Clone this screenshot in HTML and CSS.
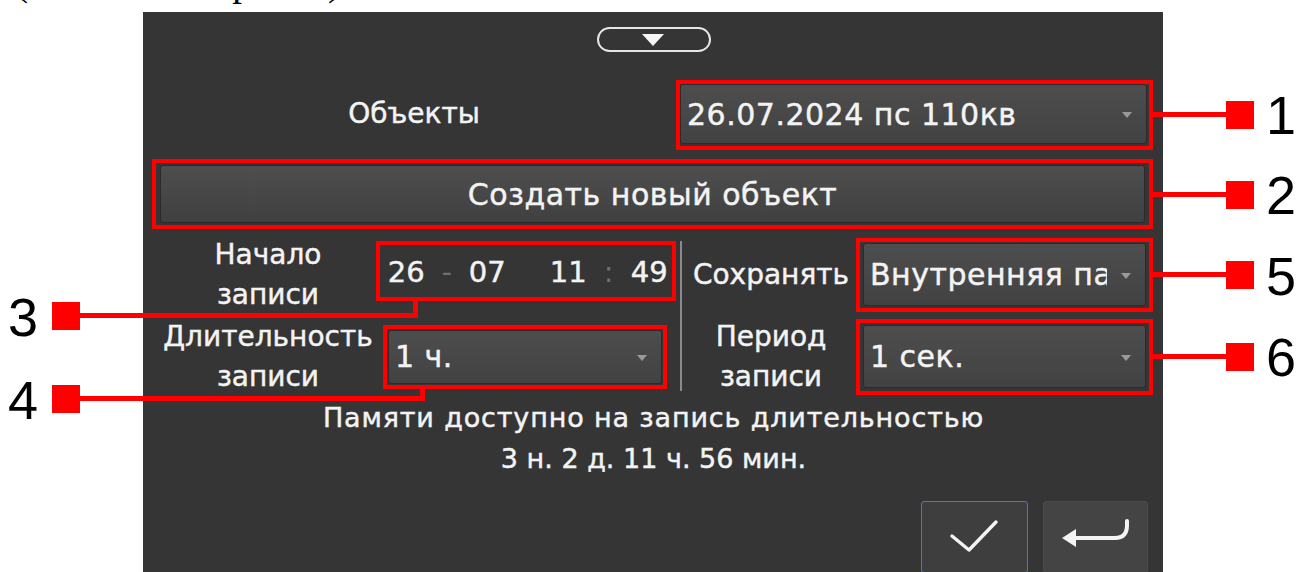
FILE: index.html
```html
<!DOCTYPE html>
<html lang="ru">
<head>
<meta charset="utf-8">
<title>Параметры записи</title>
<link rel="stylesheet" href="styles.css">
</head>
<body>
<div class="sheet">
  <div class="caption"><span>(элементы экранов)</span></div>

  <div class="stage">
    <section class="panel">
      <div class="pull-row">
        <div class="pull"><span class="pull-arrow"></span></div>
      </div>

      <div class="row-objects">
        <div class="label label-objects">Объекты</div>
        <div class="combo combo-objects">
          <span class="combo-text">26.07.2024 пс 110кв</span>
          <span class="combo-arrow"></span>
        </div>
      </div>

      <div class="btn-create">Создать новый объект</div>

      <div class="settings">
        <div class="settings-left">
          <div class="label two-line">Начало<br>записи</div>
          <div class="time-field">
            <span>26</span><span class="sep">-</span><span>07</span><span></span><span>11</span><span class="sep">:</span><span>49</span>
          </div>
          <div class="label two-line">Длительность<br>записи</div>
          <div class="combo combo-duration">
            <span class="combo-text">1 ч.</span>
            <span class="combo-arrow"></span>
          </div>
        </div>

        <div class="divider"></div>

        <div class="settings-right">
          <div class="label">Сохранять</div>
          <div class="combo combo-side combo-storage">
            <span class="combo-text">Внутренняя память</span>
            <span class="combo-arrow"></span>
          </div>
          <div class="label two-line">Период<br>записи</div>
          <div class="combo combo-side">
            <span class="combo-text">1 сек.</span>
            <span class="combo-arrow"></span>
          </div>
        </div>
      </div>

      <div class="memory-info">
        <div class="memory-title">Памяти доступно на запись длительностью</div>
        <div class="memory-value">3 н. 2 д. 11 ч. 56 мин.</div>
      </div>

      <div class="actions">
        <div class="btn-square btn-ok">
          <svg width="107" height="72" viewBox="0 0 107 72">
            <polyline points="31,35 48,49 75,21" fill="none" stroke="#f4f4f4" stroke-width="3.4" stroke-linecap="round" stroke-linejoin="round"/>
          </svg>
        </div>
        <div class="btn-square btn-back">
          <svg width="105" height="72" viewBox="0 0 105 72">
            <path d="M30 37 H72 Q84 37 84 24 V20" fill="none" stroke="#f4f4f4" stroke-width="4" stroke-linecap="round"/>
            <polygon points="19,37 33,28 33,46" fill="#f4f4f4"/>
          </svg>
        </div>
      </div>
    </section>
  </div>

  <!-- numbered callouts drawn over the panel -->
  <div class="callouts">
    <div class="frame f1"></div>
    <div class="frame f2"></div>
    <div class="frame f3"></div>
    <div class="frame f4"></div>
    <div class="frame f5"></div>
    <div class="frame f6"></div>

    <div class="lead lh1"></div>
    <div class="lead lh2"></div>
    <div class="lead lh5"></div>
    <div class="lead lh6"></div>
    <div class="lead lh3"></div>
    <div class="lead lv3"></div>
    <div class="lead lh4"></div>
    <div class="lead lv4"></div>

    <div class="tag t1"></div>
    <div class="tag t2"></div>
    <div class="tag t5"></div>
    <div class="tag t6"></div>
    <div class="tag t3"></div>
    <div class="tag t4"></div>

    <div class="num n1">1</div>
    <div class="num n2">2</div>
    <div class="num n5">5</div>
    <div class="num n6">6</div>
    <div class="num n3">3</div>
    <div class="num n4">4</div>
  </div>
</div>
</body>
</html>
```

FILE: styles.css
```css
* {
  box-sizing: border-box;
}

html,
body {
  margin: 0;
  padding: 0;
  background: #ffffff;
}

.sheet {
  position: relative;
  width: 1316px;
  height: 572px;
  overflow: hidden;
}

/* caption line of the document, mostly above the fold */
.caption {
  display: flow-root;
  height: 12px;
  padding-left: 15px;
  font: 39px/40px "Liberation Serif", serif;
  color: #000;
}

.caption span {
  display: block;
  margin-top: -38px;
  white-space: nowrap;
}

.stage {
  padding-left: 143px;
}

/* device screen */
.panel {
  width: 1020px;
  height: 560px;
  background: #353535;
  padding: 15px 16px 0 17px;
  color: #f3f3f3;
  font-family: "DejaVu Sans", "Open Sans", sans-serif;
  font-size: 28px;
  -webkit-text-stroke: 0.45px currentColor;
}

.pull-row {
  display: flex;
  justify-content: center;
  height: 25px;
}

.pull {
  width: 114px;
  height: 25px;
  border: 2px solid #e6e6e6;
  border-radius: 13px;
  display: flex;
  align-items: center;
  justify-content: center;
}

.pull-arrow {
  width: 0;
  height: 0;
  border-left: 11px solid transparent;
  border-right: 11px solid transparent;
  border-top: 12px solid #f6f6f6;
  margin-left: -2px;
}

.label {
  text-align: center;
  line-height: 40px;
  white-space: nowrap;
}

.row-objects {
  display: flex;
  align-items: center;
  margin-top: 32px;
  height: 60px;
}

.label-objects {
  flex: 1;
  padding-right: 12px;
}

/* drop-down field */
.combo {
  position: relative;
  display: flex;
  align-items: center;
  height: 100%;
  padding: 0 40px 0 6px;
  background: linear-gradient(#4d4d4d, #424242);
  border: 1px solid #2b2b2b;
  border-radius: 3px;
  overflow: hidden;
  font-size: 30px;
  letter-spacing: 0.5px;
}

.combo-text {
  white-space: nowrap;
  overflow: hidden;
}

.combo-arrow {
  position: absolute;
  right: 14px;
  top: 50%;
  margin-top: -2px;
  width: 0;
  height: 0;
  border-left: 5px solid transparent;
  border-right: 5px solid transparent;
  border-top: 6px solid #9a9a9a;
}

.combo-objects {
  width: 467px;
}

.btn-create {
  margin-top: 21px;
  margin-right: 2px;
  height: 58px;
  display: flex;
  align-items: center;
  justify-content: center;
  background: linear-gradient(#4e4e4e, #404040);
  border: 1px solid #2a2a2a;
  border-radius: 3px;
  font-size: 30px;
  letter-spacing: 0.5px;
}

.settings {
  display: flex;
  margin-top: 20px;
  height: 145px;
}

.settings-left {
  width: 520px;
  display: grid;
  grid-template-columns: 216px 1fr;
  grid-template-rows: 63px 63px;
  row-gap: 19px;
  align-items: center;
}

.settings-right {
  flex: 1;
  display: grid;
  grid-template-columns: 178px 1fr;
  grid-template-rows: 63px 63px;
  row-gap: 19px;
  align-items: center;
}

.divider {
  width: 2px;
  margin: -2px 0 -3px;
  background: #8a8a8a;
}

.time-field {
  display: grid;
  grid-template-columns: repeat(7, 40.5px);
  margin-left: 10px;
  padding-bottom: 6px;
  font-size: 29px;
}

.time-field span {
  text-align: center;
}

.time-field .sep {
  color: #6f6f6f;
  -webkit-text-stroke: 0;
}

.combo-duration {
  height: 54px;
  margin: 0 18px 0 12px;
}

.combo-side {
  margin: 0 1px 0 3px;
}

.combo-storage {
  padding-right: 38px;
}

.memory-info {
  margin-top: 9px;
  text-align: center;
  line-height: 41px;
  font-size: 27px;
}

.memory-title {
  letter-spacing: 0.85px;
}

.actions {
  display: flex;
  justify-content: flex-end;
  gap: 15px;
  margin-top: 22px;
  margin-right: -1px;
}

.btn-square {
  height: 72px;
  border-radius: 3px;
  display: flex;
}

.btn-ok {
  width: 107px;
  background: #3e3e3e;
  border: 1.5px solid #3d7fc6;
}

.btn-ok svg {
  margin: -1.5px;
}

.btn-back {
  width: 105px;
  background: #444444;
  border: 1px solid #4a4a4a;
}

.btn-back svg {
  margin: -1px;
}

/* annotation layer */
.callouts {
  position: absolute;
  inset: 0;
  pointer-events: none;
}

.frame {
  position: absolute;
  border: 4px solid #ff0000;
}

.f1 { left: 676px; top: 80px;  width: 477px;  height: 70px; }
.f2 { left: 152px; top: 159px; width: 1001px; height: 70px; }
.f3 { left: 376px; top: 241px; width: 300px;  height: 60px; }
.f4 { left: 383px; top: 325px; width: 284px;  height: 64px; }
.f5 { left: 856px; top: 238px; width: 297px;  height: 74px; }
.f6 { left: 856px; top: 319px; width: 297px;  height: 76px; }

.lead {
  position: absolute;
  background: #ff0000;
}

.lh1 { left: 1153px; top: 112px; width: 75px; height: 5px; }
.lh2 { left: 1153px; top: 192px; width: 75px; height: 5px; }
.lh5 { left: 1153px; top: 272px; width: 75px; height: 5px; }
.lh6 { left: 1153px; top: 354px; width: 75px; height: 5px; }
.lh3 { left: 80px;   top: 313px; width: 338px; height: 5px; }
.lv3 { left: 413px;  top: 301px; width: 5px;   height: 17px; }
.lh4 { left: 80px;   top: 396px; width: 345px; height: 5px; }
.lv4 { left: 420px;  top: 389px; width: 5px;   height: 12px; }

.tag {
  position: absolute;
  width: 28px;
  height: 28px;
  background: #ff0000;
}

.t1 { left: 1226px; top: 101px; }
.t2 { left: 1226px; top: 181px; }
.t5 { left: 1226px; top: 261px; }
.t6 { left: 1226px; top: 343px; }
.t3 { left: 52px;   top: 302px; }
.t4 { left: 52px;   top: 385px; }

.num {
  position: absolute;
  font: 54px/54px "Liberation Sans", Arial, sans-serif;
  color: #000;
}

.n1 { left: 1266px; top: 88px; }
.n2 { left: 1266px; top: 168px; }
.n5 { left: 1266px; top: 249px; }
.n6 { left: 1266px; top: 330px; }
.n3 { left: 8px;    top: 290px; }
.n4 { left: 8px;    top: 373px; }
```
